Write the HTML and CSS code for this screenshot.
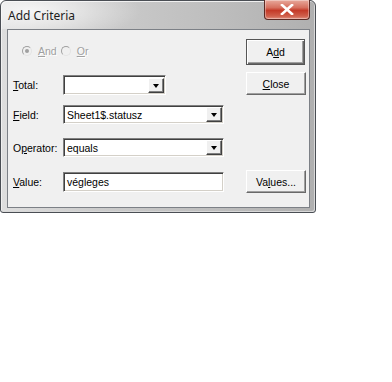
FILE: index.html
```html
<!DOCTYPE html>
<html lang="en">
<head>
    <meta charset="UTF-8">
    <title>Add Criteria</title>
    <link rel="stylesheet" href="styles.css">
</head>
<body>

    <div class="window">
        <!-- Title bar -->
        <div class="titlebar">
            <span class="title">Add Criteria</span>
            <div class="close-btn">
                <svg width="14" height="11" viewBox="0 0 14 11">
                    <path d="M2 1 L12 10 M12 1 L2 10" stroke="#fff" stroke-width="2.6" stroke-linecap="square"/>
                </svg>
            </div>
        </div>

        <!-- Dialog content -->
        <div class="client">
            <div class="form">
                <div class="radios">
                    <span class="radio checked"></span>
                    <span class="radio-label"><u>A</u>nd</span>
                    <span class="radio"></span>
                    <span class="radio-label"><u>O</u>r</span>
                </div>

                <div class="row row-total">
                    <span class="label"><u>T</u>otal:</span>
                    <div class="combo combo-short">
                        <span class="combo-text"></span>
                        <span class="drop"></span>
                    </div>
                </div>

                <div class="row row-field">
                    <span class="label"><u>F</u>ield:</span>
                    <div class="combo">
                        <span class="combo-text">Sheet1$.statusz</span>
                        <span class="drop"></span>
                    </div>
                </div>

                <div class="row row-operator">
                    <span class="label">O<u>p</u>erator:</span>
                    <div class="combo">
                        <span class="combo-text">equals</span>
                        <span class="drop"></span>
                    </div>
                </div>

                <div class="row row-value">
                    <span class="label"><u>V</u>alue:</span>
                    <div class="textbox">végleges</div>
                </div>
            </div>

            <div class="buttons">
                <button class="btn btn-default">A<u>d</u>d</button>
                <button class="btn btn-close"><u>C</u>lose</button>
                <button class="btn btn-values">Va<u>l</u>ues...</button>
            </div>
        </div>
    </div>

</body>
</html>
```

FILE: styles.css
```css
body {
    margin: 0;
    background: #fff;
    font-family: "Liberation Sans", Arial, sans-serif;
    font-size: 10.5px;
    color: #000;
}
.window {
    width: 314px;
    height: 211px;
    border: 1px solid #4a4e54;
    border-radius: 6px 6px 3px 3px;
    background: linear-gradient(to right, #dedede 0%, #cccccc 30%, #bdbdbd 70%, #b0b0b0 100%);
    box-shadow: inset 1px 1px 0 #f0f0f0, inset -1px -1px 0 #d8d8d8;
    display: flex;
    flex-direction: column;
}
.titlebar {
    height: 28px;
    display: flex;
    align-items: flex-start;
    background: radial-gradient(ellipse 110px 30px at 30px 10px, rgba(255,255,255,0.75), rgba(255,255,255,0));
    border-radius: 6px 6px 0 0;
}
.title {
    font-family: "Noto Sans", "Open Sans", sans-serif;
    font-size: 12px;
    color: #1e1e1e;
    margin: 6px 0 0 7px;
}
.close-btn {
    margin-left: auto;
    margin-right: 5px;
    margin-top: -1px;
    width: 44px;
    height: 19px;
    border: 1px solid #5c2a24;
    border-top: none;
    border-radius: 0 0 4px 4px;
    background: linear-gradient(to bottom, #e8a99c 0%, #d6705f 40%, #c43a28 55%, #d0604c 85%, #e09080 100%);
    box-shadow: inset 0 0 0 1px rgba(255,255,255,0.35);
    display: flex;
    justify-content: center;
    align-items: center;
}
.client {
    margin: 0 5px 0 6px;
    height: 177px;
    border: 1px solid #7c8086;
    background: #f0f0f0;
    display: flex;
}
.form {
    width: 232px;
    padding-left: 5px;
    display: flex;
    flex-direction: column;
}
.radios {
    height: 14px;
    margin-top: 14px;
    padding-left: 9px;
    display: flex;
    align-items: center;
    color: #a0a0a0;
    text-shadow: 1px 1px 0 #fff;
}
.radio {
    width: 8px;
    height: 8px;
    border-radius: 50%;
    border: 1px solid #a0a0a0;
    border-right-color: #e4e4e4;
    border-bottom-color: #e4e4e4;
    background: #f0f0f0;
    position: relative;
}
.radio.checked::after {
    content: "";
    position: absolute;
    left: 2px;
    top: 2px;
    width: 4px;
    height: 4px;
    border-radius: 50%;
    background: #a0a0a0;
}
.radio-label {
    margin: 0 4px 0 6px;
}
.row {
    display: flex;
    align-items: center;
}
.row-total { margin-top: 17px; }
.row-field { margin-top: 10px; }
.row-operator { margin-top: 14px; }
.row-value { margin-top: 15px; }
.label {
    width: 50px;
}
.combo, .textbox {
    box-sizing: border-box;
    width: 161px;
    height: 19px;
    background: #fff;
    border: 1px solid;
    border-color: #808080 #fff #fff #808080;
    box-shadow: inset 1px 1px 0 #404040, inset -1px -1px 0 #d4d0c8;
    display: flex;
    align-items: center;
}
.combo-short {
    width: 103px;
    height: 20px;
}
.textbox {
    height: 20px;
    padding-left: 3px;
}
.combo-text {
    flex: 1;
    padding-left: 3px;
}
.drop {
    box-sizing: border-box;
    width: 16px;
    height: 15px;
    margin-right: 1px;
    background: #f0f0f0;
    border: 1px solid;
    border-color: #fff #404040 #404040 #fff;
    box-shadow: inset -1px -1px 0 #808080;
    position: relative;
}
.drop::after {
    content: "";
    position: absolute;
    left: 4px;
    top: 5px;
    border-left: 3.5px solid transparent;
    border-right: 3.5px solid transparent;
    border-top: 4px solid #000;
}
.buttons {
    display: flex;
    flex-direction: column;
    padding-top: 9px;
    margin-left: 1px;
}
.btn {
    box-sizing: border-box;
    width: 60px;
    height: 23px;
    margin: 0;
    padding: 0;
    font-family: "Liberation Sans", Arial, sans-serif;
    font-size: 10.5px;
    color: #000;
    background: #f0f0f0;
    border: 1px solid;
    border-color: #fff #696969 #696969 #fff;
    box-shadow: inset -1px -1px 0 #a0a0a0;
}
.btn-default {
    height: 26px;
    width: 59px;
    border: 1px solid #555;
    box-shadow: inset 1px 1px 0 #fff, inset -1px -1px 0 #696969, inset -2px -2px 0 #a0a0a0;
}
.btn-close { margin-top: 7px; }
.btn-values { margin-top: 75px; }
```
